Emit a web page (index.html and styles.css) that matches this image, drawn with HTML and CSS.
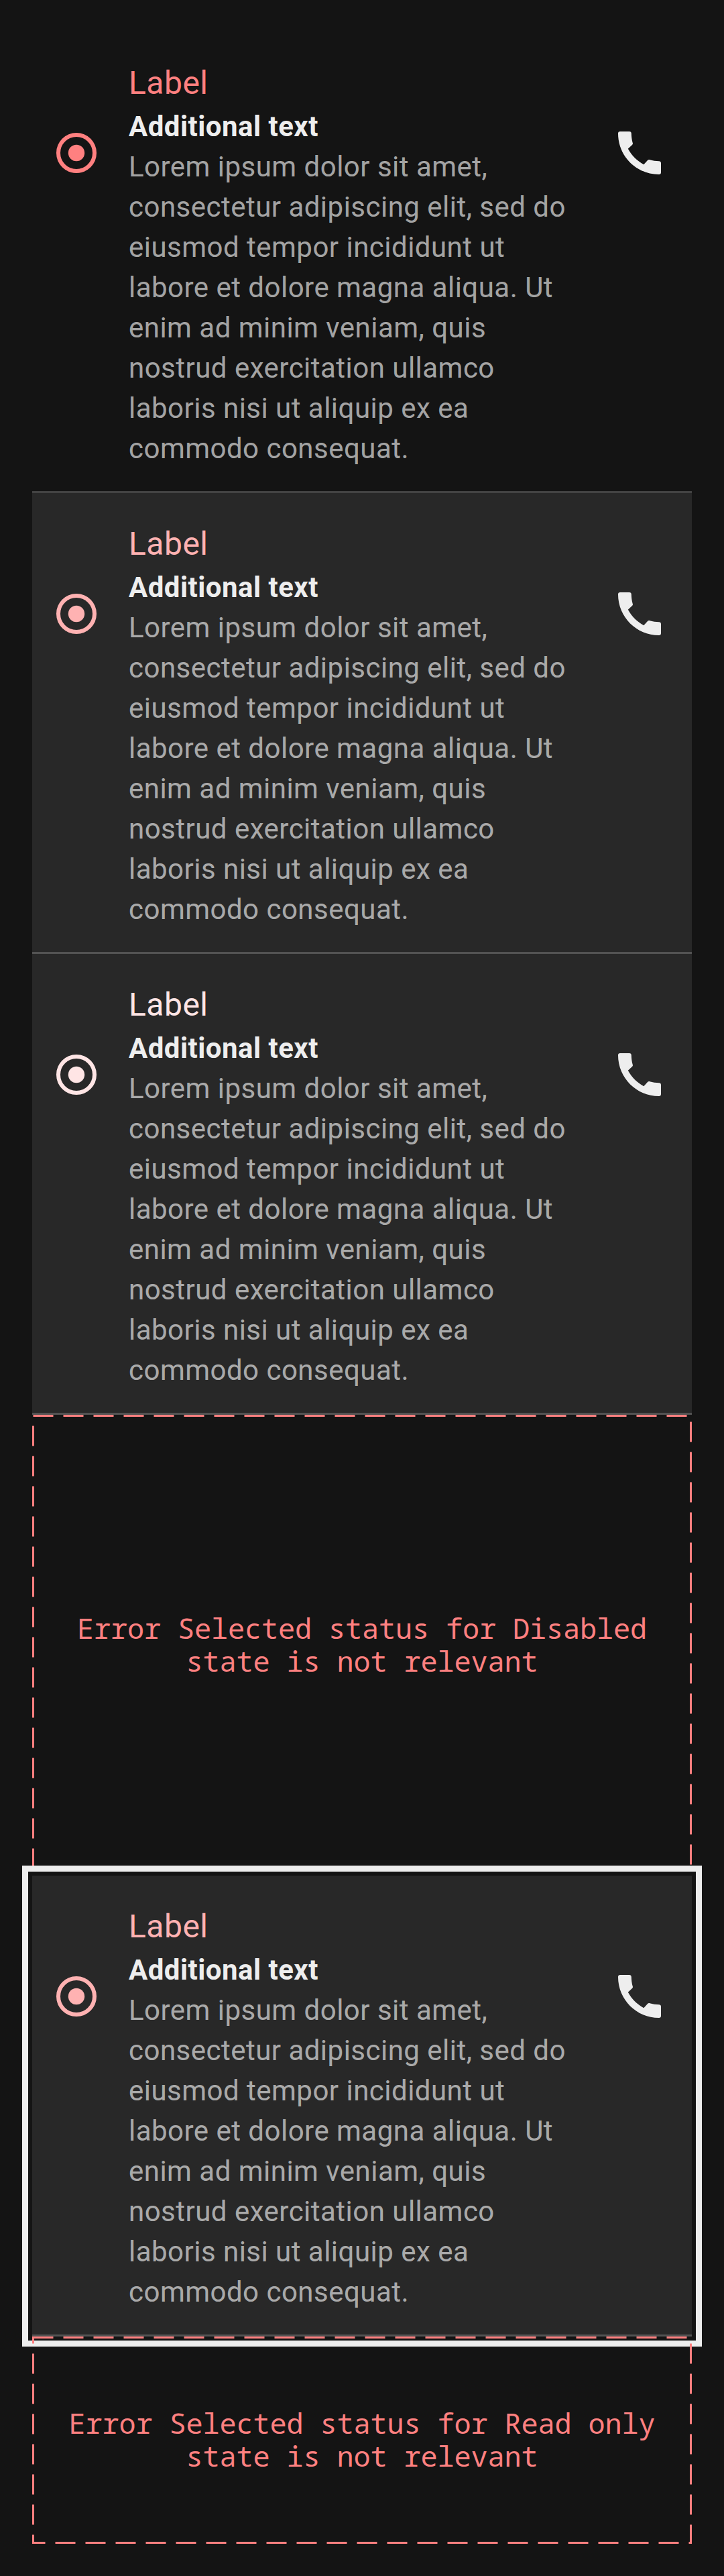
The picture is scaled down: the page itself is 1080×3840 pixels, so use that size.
FILE: index.html
```html
<!DOCTYPE html>
<html lang="en">
<head>
<meta charset="utf-8">
<title>Radio button cell states</title>
<link rel="stylesheet" href="styles.css">
</head>
<body>
<svg class="defs" aria-hidden="true">
  <symbol id="radio" viewBox="0 0 72 72">
    <circle cx="36" cy="36" r="27" fill="none" stroke="currentColor" stroke-width="6"/>
    <circle cx="36" cy="36" r="12.2" fill="currentColor"/>
  </symbol>
  <symbol id="phone" viewBox="0 0 72 72">
    <path transform="translate(4 4)" fill="currentColor" d="M0 3C0 36.700 27.300 64 61 64A3 3 0 0 0 64 61V47.300Q64 44.300 61 44.200C56.500 44.100 51.500 43.500 47.300 42.200C46 41.800 44.800 42 44 43L38.300 49.200C28 43.500 20.500 36 14.800 25.700L21 20C22 19 22.300 18 21.700 16.700C20.500 12.500 19.900 7.500 19.800 3Q19.700 0 16.700 0H3Q0 0 0 3Z"/>
  </symbol>
</svg>
<main class="list">
  <section class="cell error">
    <svg class="icon"><use href="#radio"/></svg>
    <div class="content">
      <div class="label">Label</div>
      <div class="extra">Additional text</div>
      <p class="desc">Lorem ipsum dolor sit amet, consectetur adipiscing elit, sed do eiusmod tempor incididunt ut labore et dolore magna aliqua. Ut enim ad minim veniam, quis nostrud exercitation ullamco laboris nisi ut aliquip ex ea commodo consequat.</p>
    </div>
    <svg class="icon call"><use href="#phone"/></svg>
  </section>
  <section class="cell error hovered">
    <svg class="icon"><use href="#radio"/></svg>
    <div class="content">
      <div class="label">Label</div>
      <div class="extra">Additional text</div>
      <p class="desc">Lorem ipsum dolor sit amet, consectetur adipiscing elit, sed do eiusmod tempor incididunt ut labore et dolore magna aliqua. Ut enim ad minim veniam, quis nostrud exercitation ullamco laboris nisi ut aliquip ex ea commodo consequat.</p>
    </div>
    <svg class="icon call"><use href="#phone"/></svg>
  </section>
  <section class="cell error pressed">
    <svg class="icon"><use href="#radio"/></svg>
    <div class="content">
      <div class="label">Label</div>
      <div class="extra">Additional text</div>
      <p class="desc">Lorem ipsum dolor sit amet, consectetur adipiscing elit, sed do eiusmod tempor incididunt ut labore et dolore magna aliqua. Ut enim ad minim veniam, quis nostrud exercitation ullamco laboris nisi ut aliquip ex ea commodo consequat.</p>
    </div>
    <svg class="icon call"><use href="#phone"/></svg>
  </section>
  <section class="note tall">
    <svg class="dashes"><rect x="1.5" y="1.5" width="981" height="684"/></svg>
    <p>Error Selected status for Disabled<br>state is not relevant</p>
  </section>
  <section class="cell error hovered focused">
    <svg class="icon"><use href="#radio"/></svg>
    <div class="content">
      <div class="label">Label</div>
      <div class="extra">Additional text</div>
      <p class="desc">Lorem ipsum dolor sit amet, consectetur adipiscing elit, sed do eiusmod tempor incididunt ut labore et dolore magna aliqua. Ut enim ad minim veniam, quis nostrud exercitation ullamco laboris nisi ut aliquip ex ea commodo consequat.</p>
    </div>
    <svg class="icon call"><use href="#phone"/></svg>
  </section>
  <section class="note">
    <svg class="dashes"><rect x="1.5" y="1.5" width="981" height="306"/></svg>
    <p>Error Selected status for Read only<br>state is not relevant</p>
  </section>
</main>
</body>
</html>
```
FILE: styles.css
```css
* { box-sizing: border-box; }
body {
  margin: 0;
  background: #141414;
  color: #eee;
  font-family: Roboto, sans-serif;
}
.defs { display: none; }
.list {
  display: flex;
  flex-direction: column;
  padding: 48px;
}
.cell {
  display: flex;
  align-items: flex-start;
  height: 687px;
  padding: 46px 42px 33px 30px;
  border-bottom: 3px solid rgba(255, 255, 255, .2);
}
.icon {
  flex: none;
  width: 72px;
  height: 72px;
  margin-top: 98px;
}
.call { margin-left: auto; }
.content {
  width: 672px;
  margin-left: 42px;
}
.label {
  margin-bottom: 5px;
  font-size: 48px;
  line-height: 60px;
  letter-spacing: .5px;
}
.extra, .desc {
  margin: 0;
  font-size: 42px;
  line-height: 60px;
  letter-spacing: .48px;
}
.extra { font-weight: 700; }
.desc { color: rgba(238, 238, 238, .68); }
.error > .icon:first-child, .label { color: #ff8080; }
.hovered, .pressed { background: #282828; }
.hovered > .icon:first-child, .hovered .label { color: #ffb2b2; }
.pressed > .icon:first-child, .pressed .label { color: #ffe5e5; }
.cell > .call { color: #eee; }
.focused {
  position: relative;
  z-index: 1;
  box-shadow: 0 0 0 6px #141414, 0 0 0 15px #eee;
}
.note {
  position: relative;
  z-index: 2;
  display: flex;
  align-items: center;
  justify-content: center;
  height: 309px;
  padding-bottom: 3px;
  color: #ff8080;
  font: 42px/49px "Noto Sans Mono", monospace;
  letter-spacing: -.2px;
  text-align: center;
}
.tall {
  z-index: 0;
  height: 687px;
}
.note p { margin: 0; }
.dashes {
  position: absolute;
  inset: 0;
  width: 100%;
  height: 100%;
  fill: none;
  stroke: #ff8080;
  stroke-width: 3;
  stroke-dasharray: 30 15;
}
```
